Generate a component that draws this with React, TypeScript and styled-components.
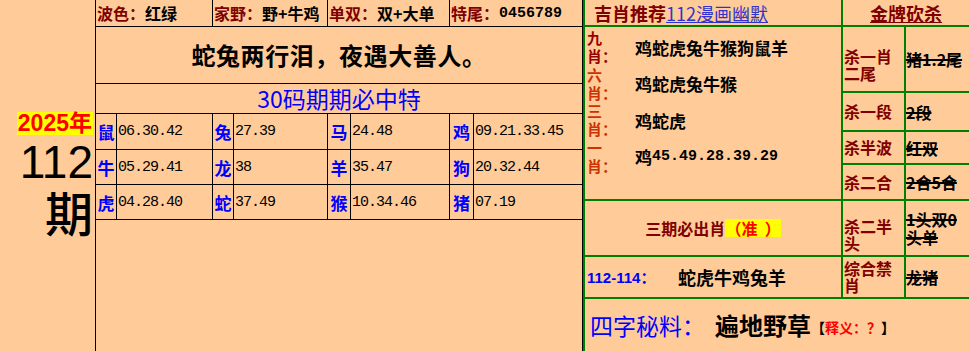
import React from 'react';
import styled, { createGlobalStyle } from 'styled-components';

const GlobalStyle = createGlobalStyle`
  html, body { margin: 0; padding: 0; background: #ffcc99; }
  body { font-family: "Noto Sans CJK SC", "Liberation Sans", sans-serif; }
  * { box-sizing: border-box; }
`;

const CJK = `"Noto Sans CJK SC", sans-serif`;
const SANS = `"Liberation Sans", "Noto Sans CJK SC", sans-serif`;
const MONO = `"Liberation Mono", "Noto Sans CJK SC", monospace`;

const Page = styled.div`
  display: flex;
  width: 969px;
  height: 351px;
  overflow: hidden;
  background: #ffcc99;
`;

/* ---------- left issue column ---------- */
const IssueCol = styled.div`
  width: 96px;
  flex: none;
  border-right: 1px solid #000;
  display: flex;
  flex-direction: column;
  align-items: flex-end;
  padding: 112px 2px 0 0;
`;

const YearTag = styled.div`
  background: #ffff00;
  color: #ff0000;
  font: bold 23px/23px ${SANS};
  padding: 0 1px;
  white-space: nowrap;
`;

const IssueNum = styled.div`
  margin-top: 4px;
  font: 46px/46px ${SANS};
  color: #000;
`;

const IssueWord = styled.div`
  margin-top: 2px;
  font: 500 48px/48px ${CJK};
  color: #000;
`;

/* ---------- middle panel ---------- */
const Middle = styled.div`
  width: 487px;
  flex: none;
  border-right: 1px solid #000;
  display: flex;
  flex-direction: column;
`;

const InfoRow = styled.div`
  display: grid;
  grid-template-columns: 117px 115px 122px 132px;
  height: 27px;
  border-bottom: 1px solid #000;
`;

const InfoCell = styled.div`
  display: flex;
  align-items: center;
  padding-left: 1px;
  border-right: 1px solid #000;
  font: bold 16px/1 ${CJK};
  color: #000;
  white-space: nowrap;
  &:last-child { border-right: none; }
`;

const InfoLabel = styled.span`
  color: #800000;
`;

const Digits = styled.span`
  font: bold 15px/1 ${MONO};
`;

const BannerRow = styled.div<{ $h: number }>`
  height: ${(p) => p.$h}px;
  border-bottom: 1px solid #000;
  display: flex;
  align-items: center;
  justify-content: center;
`;

const Slogan = styled.div`
  font: bold 24px/1 ${CJK};
  letter-spacing: 0.6px;
  color: #000;
`;

const Subtitle = styled.div`
  font: 23px/1 ${CJK};
  color: #0000ff;
`;

const NumGrid = styled.div`
  display: grid;
  grid-template-columns: 21px 96px 21px 94px 23px 99px 24px 108px;
  grid-template-rows: 36px 35px 35px;
`;

const ZodiacCell = styled.div`
  border-right: 1px solid #000;
  border-bottom: 1px solid #000;
  display: flex;
  align-items: center;
  justify-content: center;
  font: bold 17px/1 ${CJK};
  color: #0000ff;
`;

const NumCell = styled.div<{ $last?: boolean }>`
  border-right: ${(p) => (p.$last ? 'none' : '1px solid #000')};
  border-bottom: 1px solid #000;
  display: flex;
  align-items: center;
  padding-left: 1px;
  font: 15px/1 ${MONO};
  letter-spacing: -1px;
  color: #000;
`;

/* ---------- right panel ---------- */
const Right = styled.div`
  flex: 1;
  display: grid;
  background: #008000;
  padding-left: 2px;
  grid-template-columns: 256px 61px 63px;
  grid-template-rows: 25px 64px 37px 31px 34px 54px 40px 1fr;
  gap: 2px;
`;

const Cell = styled.div<{ $span?: number; $rows?: number }>`
  background: #ffcc99;
  ${(p) => (p.$span ? `grid-column: span ${p.$span};` : '')}
  ${(p) => (p.$rows ? `grid-row: span ${p.$rows};` : '')}
`;

const HeadCell = styled(Cell)<{ $center?: boolean }>`
  display: flex;
  align-items: center;
  justify-content: ${(p) => (p.$center ? 'center' : 'flex-start')};
  padding-left: ${(p) => (p.$center ? '0' : '9px')};
  font: bold 18px/1 ${CJK};
  color: #800000;
  white-space: nowrap;
`;

const HeadLink = styled.span`
  color: #3333cc;
  text-decoration: underline;
  font-weight: normal;
`;

const Underlined = styled.span`
  text-decoration: underline;
`;

const PickList = styled(Cell)`
  display: grid;
  grid-template-columns: 48px 1fr;
  grid-auto-rows: 36.5px;
  align-content: start;
  padding: 2px 0 0 2px;
`;

const PickLabel = styled.div<{ $color: string }>`
  font: bold 15px/18px ${CJK};
  color: ${(p) => p.$color};
  white-space: nowrap;
  span { display: block; height: 18px; }
`;

const PickValue = styled.div`
  display: flex;
  align-items: center;
  font: bold 17px/1 ${CJK};
  color: #000;
  white-space: nowrap;
`;

const PickDigits = styled.span`
  font: bold 15px/1 ${MONO};
`;

const KillLabel = styled(Cell)<{ $shift?: number }>`
  display: flex;
  align-items: center;
  padding: ${(p) => p.$shift ?? 0}px 1px 0 1px;
  font: bold 16px/17px ${CJK};
  color: #800000;
`;

const KillValue = styled(Cell)`
  display: flex;
  align-items: center;
  font: bold 16px/18px ${CJK};
  color: #000;
`;

const Struck = styled.span`
  text-decoration: line-through;
  text-decoration-thickness: 1.5px;
`;

const MustCell = styled(Cell)`
  display: flex;
  align-items: center;
  justify-content: center;
  font: bold 16px/1 ${CJK};
  color: #800000;
  white-space: pre;
`;

const Highlight = styled.span`
  background: #ffff00;
  color: #ff0000;
  padding: 1px 0;
`;

const RangeCell = styled(Cell)`
  display: flex;
  align-items: center;
  padding-left: 2px;
  white-space: nowrap;
`;

const RangeTag = styled.span`
  font: bold 15px/1 ${SANS};
  color: #0000ff;
  width: 91px;
`;

const RangeValue = styled.span`
  font: bold 18px/1 ${CJK};
  color: #000;
`;

const SecretCell = styled(Cell)`
  display: flex;
  align-items: center;
  padding: 0 0 0 5px;
  white-space: nowrap;
`;

const SecretLabel = styled.span`
  font: 23px/1 ${CJK};
  color: #0000ff;
  margin-right: 10px;
`;

const SecretValue = styled.span`
  font: bold 24px/1 ${CJK};
  color: #000;
`;

const Note = styled.span`
  font: bold 14px/1 ${CJK};
  color: #000;
  margin-top: 4px;
`;

const NoteRed = styled.span`
  color: #ff0000;
`;

const numbers: [string, string][][] = [
  [['鼠', '06.30.42'], ['兔', '27.39'], ['马', '24.48'], ['鸡', '09.21.33.45']],
  [['牛', '05.29.41'], ['龙', '38'], ['羊', '35.47'], ['狗', '20.32.44']],
  [['虎', '04.28.40'], ['蛇', '37.49'], ['猴', '10.34.46'], ['猪', '07.19']],
];

const picks = [
  { n: '九', color: '#990000', v: '鸡蛇虎兔牛猴狗鼠羊' },
  { n: '六', color: '#cc3300', v: '鸡蛇虎兔牛猴' },
  { n: '三', color: '#cc3300', v: '鸡蛇虎' },
  { n: '一', color: '#cc3300', v: null },
];

export default function App() {
  return (
    <>
      <GlobalStyle />
      <Page>
        <IssueCol>
          <YearTag>2025年</YearTag>
          <IssueNum>112</IssueNum>
          <IssueWord>期</IssueWord>
        </IssueCol>

        <Middle>
          <InfoRow>
            <InfoCell><InfoLabel>波色：</InfoLabel>红绿</InfoCell>
            <InfoCell><InfoLabel>家野：</InfoLabel>野+牛鸡</InfoCell>
            <InfoCell><InfoLabel>单双：</InfoLabel>双+大单</InfoCell>
            <InfoCell><InfoLabel>特尾：</InfoLabel><Digits>0456789</Digits></InfoCell>
          </InfoRow>
          <BannerRow $h={57}>
            <Slogan>蛇兔两行泪，夜遇大善人。</Slogan>
          </BannerRow>
          <BannerRow $h={30}>
            <Subtitle>30码期期必中特</Subtitle>
          </BannerRow>
          <NumGrid>
            {numbers.map((row) =>
              row.map(([z, n], i) => (
                <React.Fragment key={z}>
                  <ZodiacCell>{z}</ZodiacCell>
                  <NumCell $last={i === 3}>{n}</NumCell>
                </React.Fragment>
              ))
            )}
          </NumGrid>
        </Middle>

        <Right>
          <HeadCell>吉肖推荐<HeadLink>112漫画幽默</HeadLink></HeadCell>
          <HeadCell $span={2} $center><Underlined>金牌砍杀</Underlined></HeadCell>

          <PickList $rows={4}>
            {picks.map((p) => (
              <React.Fragment key={p.n}>
                <PickLabel $color={p.color}>
                  <span>{p.n}</span>
                  <span>肖：</span>
                </PickLabel>
                <PickValue>
                  {p.v ?? (
                    <>
                      鸡<PickDigits>45.49.28.39.29</PickDigits>
                    </>
                  )}
                </PickValue>
              </React.Fragment>
            ))}
          </PickList>

          <KillLabel $shift={12}>杀一肖二尾</KillLabel>
          <KillValue><Struck>猪1.2尾</Struck></KillValue>
          <KillLabel>杀一段</KillLabel>
          <KillValue><Struck>2段</Struck></KillValue>
          <KillLabel>杀半波</KillLabel>
          <KillValue><Struck>红双</Struck></KillValue>
          <KillLabel>杀二合</KillLabel>
          <KillValue><Struck>2合5合</Struck></KillValue>

          <MustCell>三期必出肖<Highlight>（准  ）</Highlight></MustCell>
          <KillLabel $shift={14}>杀二半头</KillLabel>
          <KillValue><Struck>1头双0头单</Struck></KillValue>

          <RangeCell>
            <RangeTag>112-114：</RangeTag>
            <RangeValue>蛇虎牛鸡兔羊</RangeValue>
          </RangeCell>
          <KillLabel>综合禁肖</KillLabel>
          <KillValue><Struck>龙猪</Struck></KillValue>

          <SecretCell $span={3}>
            <SecretLabel>四字秘料：</SecretLabel>
            <SecretValue>遍地野草</SecretValue>
            <Note>【<NoteRed>释义：？</NoteRed>】</Note>
          </SecretCell>
        </Right>
      </Page>
    </>
  );
}
